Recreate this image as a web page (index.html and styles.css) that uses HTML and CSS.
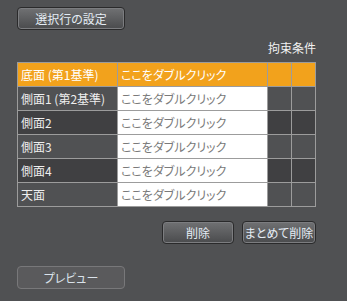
FILE: index.html
```html
<!DOCTYPE html>
<html lang="ja">
<head>
    <meta charset="UTF-8">
    <title>選択行の設定</title>
    <link rel="stylesheet" href="styles.css">
</head>
<body>
    <div class="panel">
        <button class="btn btn-top">選択行の設定</button>
        <div class="caption">拘束条件</div>
        <div class="grid">
            <div class="cell name selected">底面 (第1基準)</div>
            <div class="cell value selected">ここをダブルクリック</div>
            <div class="cell flag selected"></div>
            <div class="cell flag selected"></div>

            <div class="cell name">側面1 (第2基準)</div>
            <div class="cell value">ここをダブルクリック</div>
            <div class="cell flag"></div>
            <div class="cell flag"></div>

            <div class="cell name alt">側面2</div>
            <div class="cell value">ここをダブルクリック</div>
            <div class="cell flag alt"></div>
            <div class="cell flag alt"></div>

            <div class="cell name">側面3</div>
            <div class="cell value">ここをダブルクリック</div>
            <div class="cell flag"></div>
            <div class="cell flag"></div>

            <div class="cell name alt">側面4</div>
            <div class="cell value">ここをダブルクリック</div>
            <div class="cell flag alt"></div>
            <div class="cell flag alt"></div>

            <div class="cell name">天面</div>
            <div class="cell value">ここをダブルクリック</div>
            <div class="cell flag"></div>
            <div class="cell flag"></div>
        </div>
        <div class="actions">
            <button class="btn btn-delete">削除</button>
            <button class="btn btn-delete-all">まとめて削除</button>
        </div>
        <button class="btn btn-preview">プレビュー</button>
    </div>
</body>
</html>
```

FILE: styles.css
```css
body {
    margin: 0;
    background-color: #505153;
    font-family: "Noto Sans CJK JP", "Noto Sans", sans-serif;
    font-size: 12px;
    font-feature-settings: "palt";
    color: #eeeeee;
}
.panel {
    width: 299px;
    padding: 7px 0 0 17px;
}
.btn {
    display: block;
    box-sizing: border-box;
    height: 23px;
    padding: 0;
    font-family: inherit;
    font-size: 12px;
    font-feature-settings: "palt";
    color: #e4ecf4;
    background: linear-gradient(to bottom, #707173, #4a4b4d);
    border: 1px solid #2a2a2b;
    border-radius: 4px;
    box-shadow: inset 0 0 0 1px #7c7d80;
}
.btn-top {
    width: 108px;
}
.caption {
    text-align: right;
    margin-top: 9px;
    height: 23px;
    line-height: 18px;
    color: #f2f2f2;
}
.grid {
    display: grid;
    grid-template-columns: 99px 149px 23px 23px;
    grid-auto-rows: 23px;
    gap: 1px;
    padding: 1px;
    background-color: #9c9c9c;
}
.cell {
    background-color: #505153;
    line-height: 23px;
    padding-left: 3px;
    white-space: nowrap;
    overflow: hidden;
}
.cell.alt {
    background-color: #404042;
}
.name {
    color: #eeeeee;
}
.value {
    background-color: #ffffff;
    color: #7a7a7a;
}
.cell.selected {
    background-color: #f2a21c;
    color: #ffffff;
}
.actions {
    display: flex;
    justify-content: flex-end;
    gap: 8px;
    margin-top: 14px;
}
.btn-delete {
    width: 72px;
}
.btn-delete-all {
    width: 74px;
}
.btn-preview {
    width: 108px;
    margin-top: 22px;
    background: #5a5a5c;
    border-color: #78787a;
    box-shadow: none;
    color: #dae2ea;
}
```
